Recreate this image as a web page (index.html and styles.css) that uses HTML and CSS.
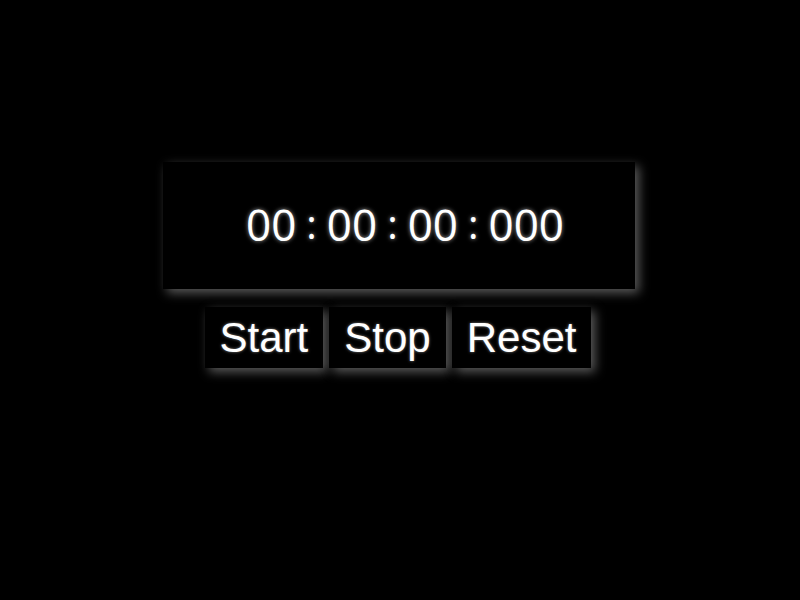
FILE: index.html
```html
<!DOCTYPE html>
<html>
<head>
<meta charset="utf-8">
<link rel="stylesheet" href="styles.css">
</head>
<body>
<div class="app">
  <div class="timer">
    <span class="num">00</span><span class="sep">:</span><span class="num">00</span><span class="sep">:</span><span class="num">00</span><span class="sep">:</span><span class="num">000</span>
  </div>
  <div class="controls">
    <button class="btn">Start</button>
    <button class="btn">Stop</button>
    <button class="btn">Reset</button>
  </div>
</div>
</body>
</html>
```
FILE: styles.css
```css
html, body {
  margin: 0;
  padding: 0;
  background: #000;
  height: 100%;
}
.app {
  display: flex;
  flex-direction: column;
  align-items: center;
  padding-top: 162px;
}
.timer {
  box-sizing: border-box;
  width: 472px;
  height: 127px;
  margin-right: 2px;
  background: #000;
  box-shadow: 4px 4px 10px #5a5a5a;
  display: flex;
  align-items: center;
  justify-content: center;
  font-family: "Open Sans", sans-serif;
  font-size: 44px;
  color: #fff;
  text-shadow: 0 0 4px rgba(255,255,255,0.6);
  padding-bottom: 4px;
  padding-left: 12px;
}
.sep {
  margin: 0 10px;
  font-size: 40px;
}
.controls {
  display: flex;
  gap: 6px;
  margin-top: 18px;
  margin-right: 4px;
}
.btn {
  box-sizing: border-box;
  height: 61px;
  padding: 0 15px;
  background: #000;
  border: none;
  color: #fff;
  font-family: "Liberation Sans", Arial, sans-serif;
  font-size: 42px;
  text-shadow: 0 0 3px rgba(255,255,255,0.5);
  box-shadow: 4px 4px 10px #5a5a5a;
  cursor: pointer;
}
```
